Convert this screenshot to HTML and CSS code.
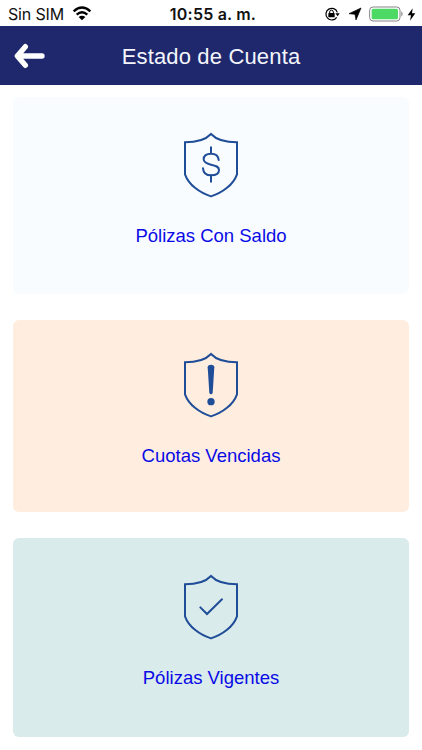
FILE: index.html
```html
<!DOCTYPE html>
<html lang="es">
<head>
<meta charset="utf-8">
<title>Estado de Cuenta</title>
<link rel="stylesheet" href="styles.css">
</head>
<body>
<svg class="defs" width="0" height="0" aria-hidden="true">
  <symbol id="shield" viewBox="0 0 240 270">
    <path d="M123 42C108 58 79 67 45 67V163C56 194 88 218 123 229C158 218 190 194 201 163V67C167 67 138 58 123 42Z"/>
  </symbol>
</svg>
<div class="status">
  <div class="status-left">
    <span class="carrier">Sin SIM</span>
    <svg class="wifi" width="20" height="15" viewBox="0 0 60 45">
      <g fill="none" stroke="#000" stroke-width="7"><path d="M5 16Q30-7 55 16"/><path d="M14 26Q30 11 46 26"/></g>
      <path d="M20 33Q30 25 40 33L30 43Z"/>
    </svg>
  </div>
  <span class="time">10:55 a. m.</span>
  <div class="status-right">
    <svg class="lock" width="16" height="16" viewBox="0 0 48 48">
      <path d="M38 34A17.500 17.500 0 1 1 40 19" fill="none" stroke="#000" stroke-width="3.6"/>
      <path d="M34 22H47L41 31Z"/>
      <rect x="13" y="21" width="19" height="13" rx="2"/>
      <path d="M17 22V18a5.500 5.500 0 0 1 11 0V22" fill="none" stroke="#000" stroke-width="3"/>
    </svg>
    <svg class="locate" width="14" height="14" viewBox="0 0 42 42"><path d="M39 3L24 39L21 22L3 20Z" stroke="#000" stroke-width="2" stroke-linejoin="round"/></svg>
    <svg class="battery" width="36" height="16" viewBox="0 0 108 48">
      <rect x="2" y="3" width="91" height="42" rx="10" fill="#fff" stroke="#858585" stroke-width="3"/>
      <rect x="8" y="8" width="79" height="32" rx="5" fill="#4cd964"/>
      <path d="M97 16Q105 24 97 32Z" fill="#858585"/>
    </svg>
    <svg class="bolt" width="9" height="13" viewBox="0 0 27 39"><path d="M17 1L2 22H12L9 38L25 16H15Z"/></svg>
  </div>
</div>
<header class="header">
  <svg class="back" width="31" height="26" viewBox="0 0 93 78">
    <path d="M84 39H12M34 11L10 39L34 67" fill="none" stroke="#fff" stroke-width="16" stroke-linecap="round" stroke-linejoin="round"/>
  </svg>
  <h1 class="title">Estado de Cuenta</h1>
</header>
<main class="cards">
  <section class="card balance">
    <svg class="icon" viewBox="0 0 240 270">
      <use href="#shield"/>
      <path d="M123 82V101M123 165V185M146 120C145 107 136 101 123 101C109 101 101 108 101 118C101 128 109 131 123 134C138 137 147 140 147 150C147 160 138 166 123 166C108 166 100 158 99 145"/>
    </svg>
    <span class="label">Pólizas Con Saldo</span>
  </section>
  <section class="card overdue">
    <svg class="icon" viewBox="0 0 240 270">
      <use href="#shield"/>
      <path class="solid" d="M113 82Q113 74 123 74Q133 74 133 82L128 158Q127 163 123 163Q119 163 118 158Z"/>
      <circle class="solid" cx="123" cy="185" r="11"/>
    </svg>
    <span class="label">Cuotas Vencidas</span>
  </section>
  <section class="card active">
    <svg class="icon" viewBox="0 0 240 270">
      <use href="#shield"/>
      <path d="M91 136L111 156L156 112"/>
    </svg>
    <span class="label">Pólizas Vigentes</span>
  </section>
</main>
</body>
</html>
```
FILE: styles.css
```css
* { box-sizing: border-box; }
body {
  margin: 0;
  height: 750px;
  overflow: hidden;
  background: #fff;
  font-family: "Liberation Sans", Arial, sans-serif;
}
.defs { display: block; }
.status {
  display: grid;
  grid-template-columns: 1fr auto 1fr;
  align-items: center;
  height: 26px;
  padding: 2px 6px 0 8px;
  color: #111;
  font: 16px/24px Inter, sans-serif;
}
.status-left, .status-right { display: flex; align-items: center; }
.status-left { gap: 8px; }
.status-right { justify-content: flex-end; }
.carrier { letter-spacing: -0.15px; }
.wifi { margin-top: -2px; }
.time { padding-left: 2px; font-weight: 600; letter-spacing: 0.2px; }
.locate { margin: 0 7px 0 8px; }
.bolt { margin-left: 2px; }
.header {
  display: grid;
  grid-template-columns: 46px 1fr 46px;
  align-items: center;
  height: 59px;
  background: #1f286d;
}
.back { margin-left: 14px; }
.title {
  margin: 3px 0 0;
  color: #f4f5fc;
  font-size: 22px;
  font-weight: 400;
  letter-spacing: 0.16px;
  line-height: 28px;
  text-align: center;
}
.cards { display: flex; flex-direction: column; gap: 26px; padding: 12px 13px 13px; }
.card {
  display: flex;
  flex-direction: column;
  align-items: center;
  border-radius: 6px;
}
.balance { height: 197px; padding-top: 23px; background: #f8fcff; }
.overdue { height: 192px; padding-top: 20px; background: #ffeee0; }
.active { height: 199px; padding-top: 24px; background: #d9ebea; }
.icon {
  width: 80px;
  height: 90px;
  margin-left: -2px;
  fill: none;
  stroke: #204d98;
  stroke-width: 6;
  stroke-linecap: round;
  stroke-linejoin: miter;
}
.icon .solid { fill: #204d98; stroke: none; }
.label {
  margin-top: 14px;
  color: #0a0ae6;
  font-size: 18.5px;
  line-height: 24px;
}
```
